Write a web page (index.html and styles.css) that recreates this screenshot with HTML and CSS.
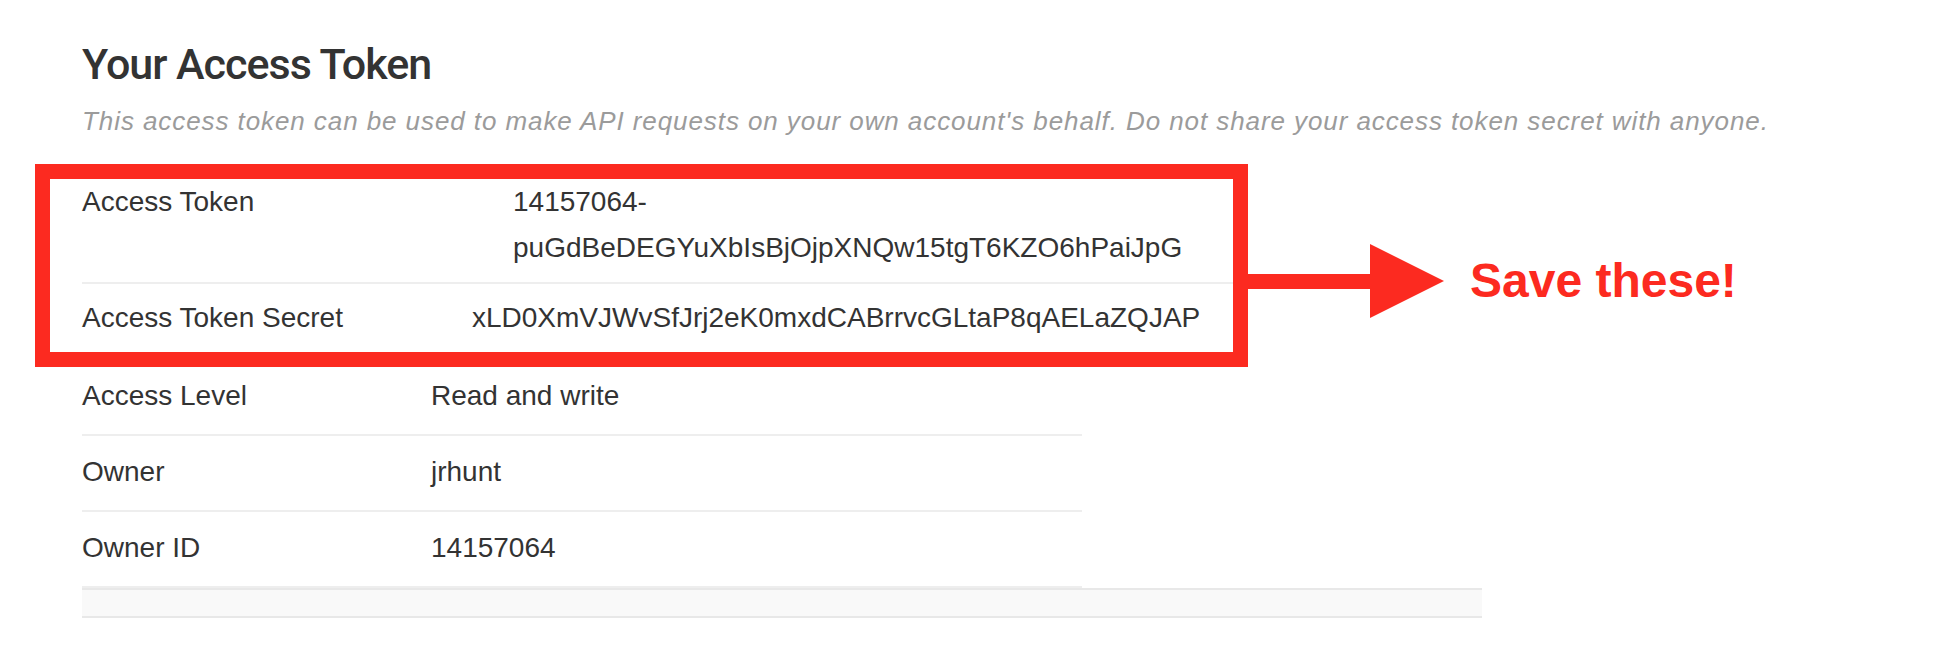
FILE: index.html
```html
<!DOCTYPE html>
<html lang="en">
<head>
<meta charset="utf-8">
<title>Your Access Token</title>
<link rel="stylesheet" href="styles.css">
</head>
<body>
<main class="page">
  <header class="intro">
    <h1 class="title">Your Access Token</h1>
    <p class="subtitle">This access token can be used to make API requests on your own account's behalf. Do not share your access token secret with anyone.</p>
  </header>

  <section class="annotated">
    <div class="highlight">
      <div class="row row--token">
        <div class="label">Access Token</div>
        <div class="value">14157064-puGdBeDEGYuXbIsBjOjpXNQw15tgT6KZO6hPaiJpG</div>
      </div>
      <div class="row row--secret">
        <div class="label">Access Token Secret</div>
        <div class="value">xLD0XmVJWvSfJrj2eK0mxdCABrrvcGLtaP8qAELaZQJAP</div>
      </div>
    </div>
    <svg class="arrow" width="196" height="74" viewBox="0 0 196 74" aria-hidden="true">
      <rect x="0" y="30" width="123" height="15" fill="#fc2a20"/>
      <polygon points="122,0 122,74 196,37" fill="#fc2a20"/>
    </svg>
    <div class="callout">Save these!</div>
  </section>

  <div class="details">
    <div class="drow">
      <div class="label">Access Level</div>
      <div class="value">Read and write</div>
    </div>
    <div class="drow">
      <div class="label">Owner</div>
      <div class="value">jrhunt</div>
    </div>
    <div class="drow">
      <div class="label">Owner ID</div>
      <div class="value">14157064</div>
    </div>
  </div>
  <div class="footer-bar"></div>
</main>
</body>
</html>
```

FILE: styles.css
```css
html, body {
  margin: 0;
  padding: 0;
  background: #ffffff;
}

.page {
  padding: 38px 0 0 82px;
  font-family: "Liberation Sans", Arial, sans-serif;
  color: #333333;
}

.title {
  margin: 0;
  font-family: Roboto, "Liberation Sans", sans-serif;
  font-weight: 500;
  font-size: 43px;
  line-height: 52px;
  letter-spacing: -1px;
  color: #333333;
}

.subtitle {
  margin: 16px 0 0;
  font-style: italic;
  font-size: 26px;
  line-height: 30px;
  letter-spacing: 0.92px;
  color: #9b9b9b;
  white-space: nowrap;
}

.annotated {
  display: flex;
  align-items: flex-start;
  margin: 28px 0 0 -47px;
}

.highlight {
  width: 1183px;
  border: 15px solid #fc2a20;
  flex: none;
}

.row {
  display: grid;
  margin-left: 32px;
  font-size: 28px;
  line-height: 46px;
  padding: 11px 0;
}

.row--token {
  grid-template-columns: 431px 1fr;
  padding-top: 0;
  border-bottom: 2px solid #eeeeee;
}

.row--secret {
  grid-template-columns: 390px 1fr;
}

.arrow {
  flex: none;
  display: block;
  margin-top: 80px;
}

.callout {
  margin: 93px 0 0 26px;
  font-weight: 700;
  font-size: 48px;
  line-height: 48px;
  color: #fc2a20;
  white-space: nowrap;
}

.details {
  width: 1000px;
}

.drow {
  display: grid;
  grid-template-columns: 349px 1fr;
  font-size: 28px;
  line-height: 46px;
  padding: 13px 0 15px;
  border-bottom: 2px solid #eeeeee;
}

.drow:first-child {
  padding-top: 6px;
}

.footer-bar {
  width: 1400px;
  height: 26px;
  background: #f9f9f9;
  border-top: 2px solid #e8e8e8;
  border-bottom: 2px solid #e8e8e8;
}
```
